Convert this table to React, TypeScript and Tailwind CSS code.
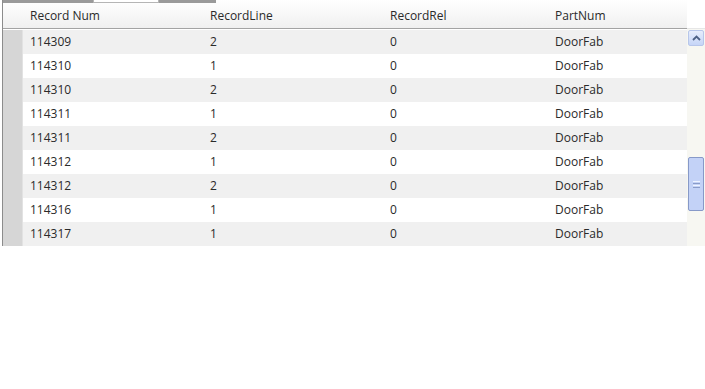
const rows = [
  ["114309", "2", "0", "DoorFab"],
  ["114310", "1", "0", "DoorFab"],
  ["114310", "2", "0", "DoorFab"],
  ["114311", "1", "0", "DoorFab"],
  ["114311", "2", "0", "DoorFab"],
  ["114312", "1", "0", "DoorFab"],
  ["114312", "2", "0", "DoorFab"],
  ["114316", "1", "0", "DoorFab"],
  ["114317", "1", "0", "DoorFab"],
];

const headers = ["Record Num", "RecordLine", "RecordRel", "PartNum"];
const colW = ["w-[180px]", "w-[180px]", "w-[165px]", "flex-1"];

export default function App() {
  return (
    <div className="w-[705px] h-[389px] bg-white text-[12px] text-[#2a2a2a]" style={{ fontFamily: '"Open Sans", "Noto Sans", sans-serif' }}>
      <div className="relative w-[703px] h-[246px] border-l border-[#8c8c8c] ml-[2px] flex flex-col">
        {/* tab strip peeking at top */}
        <div className="absolute top-0 left-0 flex h-[3px]">
          <div className="w-[90px] bg-[#9a9a9a]" />
          <div className="w-[66px] border-b border-x border-[#b5b5b5] bg-white" />
          <div className="w-[57px] bg-[#9a9a9a]" />
        </div>
        <div className="flex h-[29px] shrink-0">
          <div className="flex flex-1 items-center border-b border-[#a3a3a3] bg-gradient-to-b from-white to-[#f0f0f0]">
            <div className="w-[20px]" />
            {headers.map((h, i) => (
              <div key={h} className={`${colW[i]} pl-[7px] pt-[4px]`}>{h}</div>
            ))}
          </div>
          <div className="w-[18px] bg-white border-b border-[#e6e6e6]" />
        </div>
        <div className="flex flex-1">
          <div className="flex-1 flex flex-col pt-[1px]">
            {rows.map((r, ri) => (
              <div key={ri} className={`flex h-[24px] items-center ${ri % 2 === 0 ? "bg-[#f0f0f0]" : "bg-white"}`}>
                <div className="w-[20px] h-full bg-[#d6d6d6] border-r border-[#e2e2e2]" />
                {r.map((c, ci) => (
                  <div key={ci} className={`${colW[ci]} pl-[7px]`}>{c}</div>
                ))}
              </div>
            ))}
          </div>
          <div className="w-[18px] bg-[#f7f7f2] flex flex-col items-center pt-[1px]">
            <div className="w-[16px] h-[16px] rounded-[2px] border border-[#b7c6ea] bg-gradient-to-b from-[#e6edfc] to-[#c6d5f7] flex items-center justify-center">
              <svg width="9" height="6" viewBox="0 0 9 6">
                <path d="M1 5 L4.5 1.5 L8 5" stroke="#4d6185" strokeWidth="1.8" fill="none" />
              </svg>
            </div>
            <div className="mt-[111px] w-[16px] h-[54px] rounded-[2px] border border-[#8799c8] bg-[#c3d2f7] flex flex-col items-center justify-center gap-[1px]">
              <div className="w-[7px] h-[1px] bg-[#eef3ff]" />
              <div className="w-[7px] h-[1px] bg-[#8a9cc9]" />
              <div className="w-[7px] h-[1px] bg-[#eef3ff]" />
              <div className="w-[7px] h-[1px] bg-[#8a9cc9]" />
            </div>
          </div>
        </div>
      </div>
    </div>
  );
}
